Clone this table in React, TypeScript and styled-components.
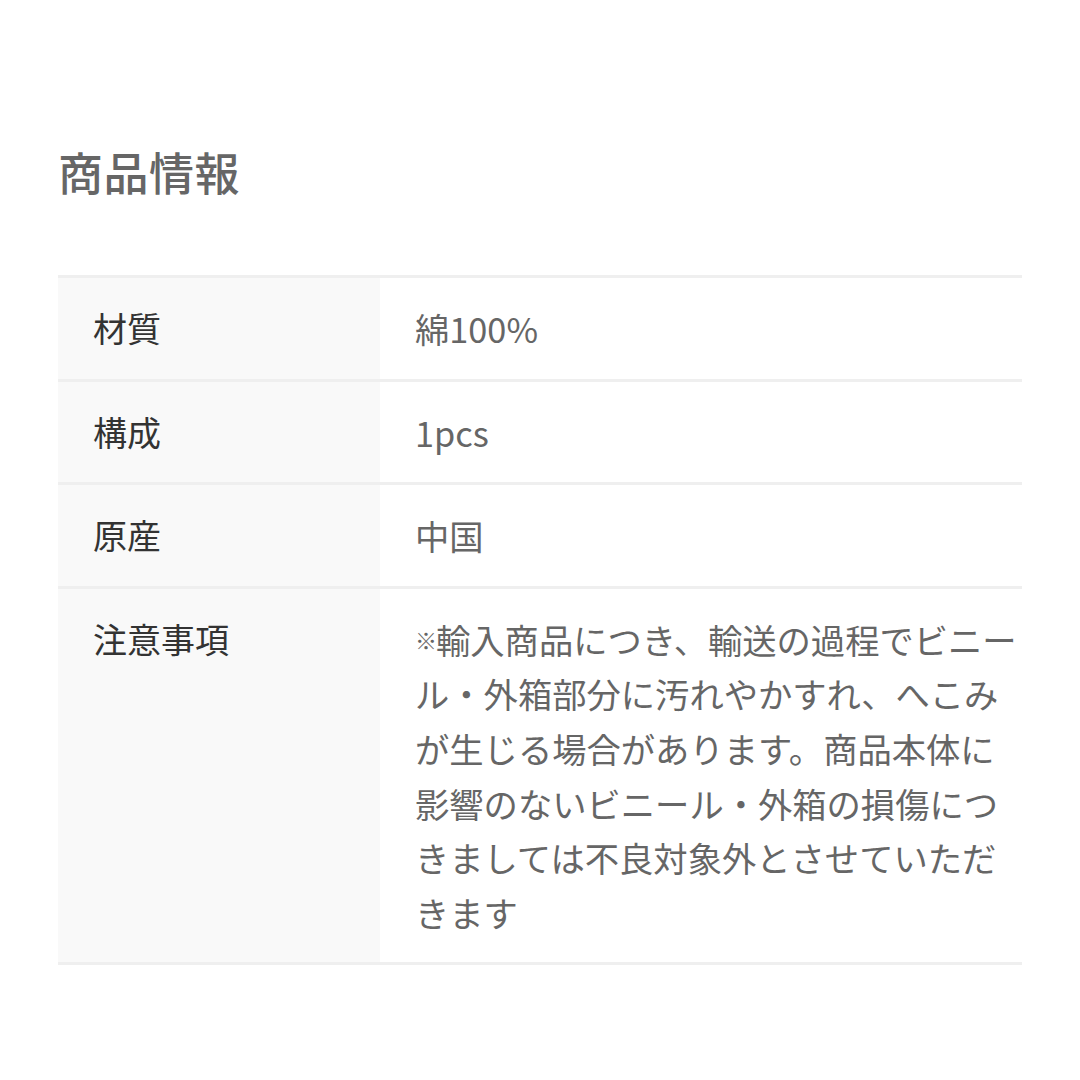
import React from "react";
import styled, { createGlobalStyle } from "styled-components";

const GlobalStyle = createGlobalStyle`
  html, body {
    margin: 0;
    padding: 0;
    background: #ffffff;
  }
  body {
    font-family: "Noto Sans CJK JP", "Noto Sans", sans-serif;
  }
`;

const Page = styled.main`
  padding: 138px 58px 0 58px;
`;

const Title = styled.h2`
  margin: 0 0 69px 0;
  font-size: 45px;
  line-height: 68px;
  font-weight: 500;
  color: #666666;
  letter-spacing: 0.5px;
`;

const Table = styled.div`
  display: grid;
  grid-template-columns: 322px 1fr;
  border-top: 3px solid #efefef;
`;

const Label = styled.div`
  background: #f9f9f9;
  padding: 23px 20px 23px 35px;
  font-size: 34px;
  line-height: 54.6px;
  color: #333333;
  border-bottom: 3px solid #efefef;
`;

const Value = styled.div`
  background: #ffffff;
  padding: 23px 0 23px 35px;
  font-size: 34.3px;
  line-height: 54.6px;
  color: #666666;
  border-bottom: 3px solid #efefef;
`;

const Line = styled.span`
  display: block;
  white-space: nowrap;
`;

const Mark = styled.span`
  display: inline-block;
  width: 21px;
  font-size: 22px;
  font-weight: 700;
  vertical-align: top;
  overflow: visible;
`;

const rows: { label: string; lines: string[] }[] = [
  { label: "材質", lines: ["綿100%"] },
  { label: "構成", lines: ["1pcs"] },
  { label: "原産", lines: ["中国"] },
  {
    label: "注意事項",
    lines: [
      "※輸入商品につき、輸送の過程でビニー",
      "ル・外箱部分に汚れやかすれ、へこみ",
      "が生じる場合があります。商品本体に",
      "影響のないビニール・外箱の損傷につ",
      "きましては不良対象外とさせていただ",
      "きます",
    ],
  },
];

function renderLine(l: string) {
  if (l.startsWith("※")) {
    return (
      <>
        <Mark>※</Mark>
        {l.slice(1)}
      </>
    );
  }
  return l;
}

export default function App() {
  return (
    <>
      <GlobalStyle />
      <Page>
        <Title>商品情報</Title>
        <Table>
          {rows.map((r) => (
            <React.Fragment key={r.label}>
              <Label>{r.label}</Label>
              <Value>
                {r.lines.map((l, i) => (
                  <Line key={i}>{renderLine(l)}</Line>
                ))}
              </Value>
            </React.Fragment>
          ))}
        </Table>
      </Page>
    </>
  );
}
